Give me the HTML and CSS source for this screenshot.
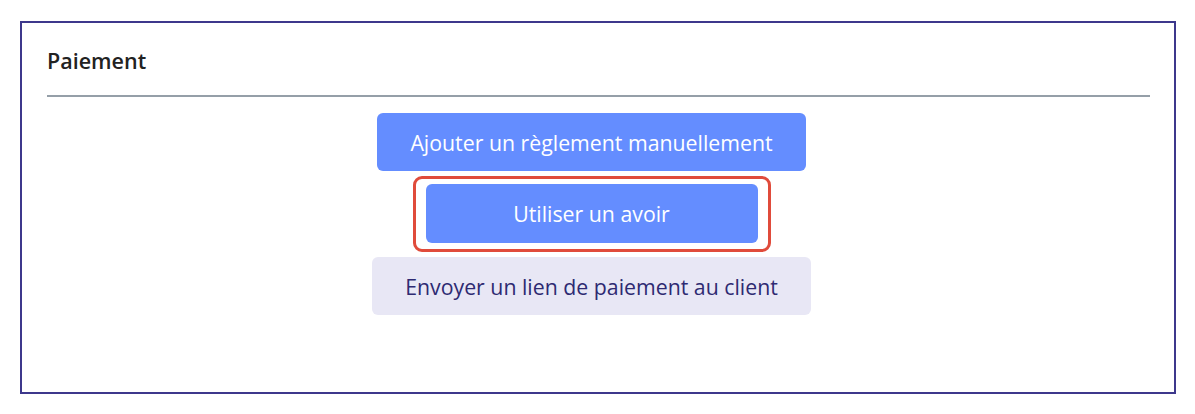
FILE: index.html
```html
<!DOCTYPE html>
<html lang="fr">
<head>
    <meta charset="UTF-8">
    <meta name="viewport" content="width=device-width, initial-scale=1.0">
    <link rel="stylesheet" href="styles.css">
</head>
<body>
<div class="card">
    <div class="card-head">
        <h2>Paiement</h2>
    </div>
    <div class="actions">
        <button class="btn primary">Ajouter un règlement manuellement</button>
        <div class="focus">
            <button class="btn primary wide">Utiliser un avoir</button>
        </div>
        <button class="btn soft">Envoyer un lien de paiement au client</button>
    </div>
</div>
</body>
</html>
```

FILE: styles.css
```css
body{
	margin:0;
	padding:21px 19px 20px 20px;
	background:#fff;
	font-family:"Open Sans", "Noto Sans", sans-serif;
}
.card{
	border:2px solid #3d388c;
	height:369px;
}
.card-head{
	margin:0 24px 0 25px;
	padding-top:24px;
	border-bottom:2px solid #959fa8;
}
h2{
	margin:0 0 20px;
	font-size:21.5px;
	line-height:28px;
	font-weight:600;
	color:#222;
}
.actions{
	display:flex;
	flex-direction:column;
	align-items:center;
	gap:5px;
	padding:16px 13px 0 0;
}
.btn{
	border:0;
	border-radius:6px;
	height:58px;
	padding:0 33px;
	font-family:inherit;
	font-size:21.3px;
	font-weight:500;
	cursor:pointer;
}
.primary{
	background:#648dff;
	color:#fff;
}
.soft{
	background:#e8e7f5;
	color:#2e2a72;
}
.wide{
	width:332px;
	height:59px;
}
.focus{
	border:3px solid #e04b3b;
	border-radius:9px;
	padding:5px 10px 6px;
}
```
